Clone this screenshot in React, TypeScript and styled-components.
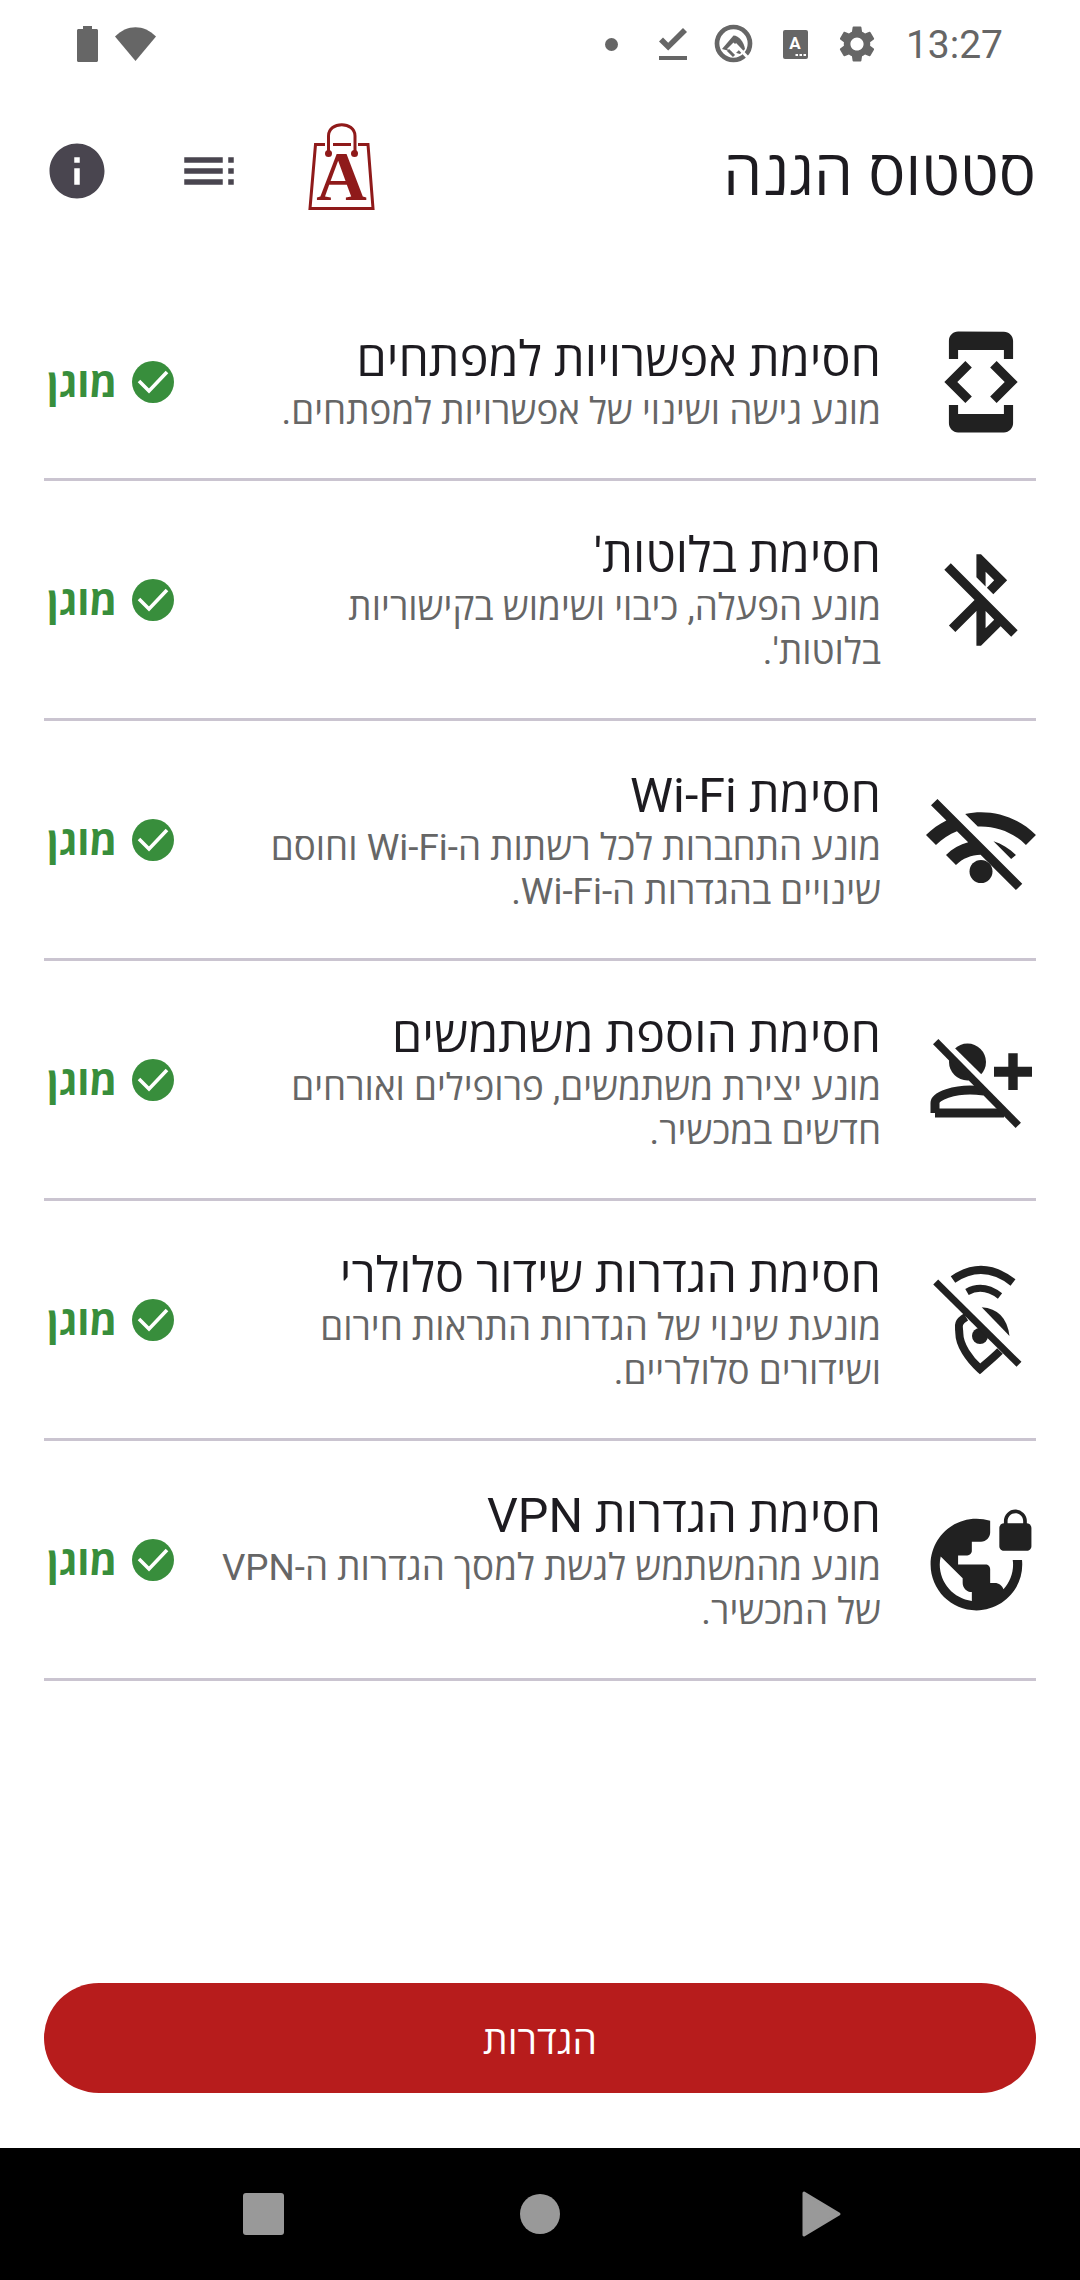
import React from 'react';
import styled, { createGlobalStyle } from 'styled-components';
import {
  MdBluetoothDisabled,
  MdDeveloperMode,
  MdFileDownloadDone,
  MdInfo,
  MdSettings,
  MdToc,
  MdVpnLock,
} from 'react-icons/md';

const GlobalStyle = createGlobalStyle`
  html, body {
    margin: 0;
    padding: 0;
    background: #ffffff;
  }
  body {
    font-family: Roboto, "Open Sans", "Noto Sans", "Liberation Sans", sans-serif;
  }
  * {
    box-sizing: border-box;
  }
`;

// the wifi glyph is drawn bigger and lower than the others in the list
const WifiGlyph = styled.svg`
  margin: 5px -5px 0 0;
`;

const WifiOffIcon = () => (
  <WifiGlyph viewBox="0 0 24 24" width="120" height="120" fill="#212121">
    <circle cx="12" cy="16.3" r="2.3" />
    <path d="M22.99 9C19.15 5.16 13.8 3.76 8.84 4.78l2.52 2.52c3.47-.17 6.99 1.05 9.63 3.7l2-2zm-4 4c-1.29-1.29-2.84-2.2-4.49-2.73l3.53 3.53.96-.8zM2 3.05L5.07 6.1C3.6 6.82 2.22 7.78 1 9l1.99 2c1.24-1.24 2.67-2.16 4.2-2.77l2.24 2.24C7.81 10.89 6.27 11.73 5 13v.01L6.99 15c1.36-1.36 3.14-2.04 4.92-2.06L18.98 20l1.27-1.26L3.29 1.79 2 3.05z" />
  </WifiGlyph>
);

const AddUserOffIcon = () => (
  <svg viewBox="0 0 110 110" width="110" height="110" fill="#212121">
    <circle cx="41.5" cy="37" r="18.5" />
    <path d="M9 88V78C9 70 30 65 44 65C50 65 54 65.5 58 66" fill="none" stroke="#212121" strokeWidth="9" />
    <path d="M9 88H78" fill="none" stroke="#212121" strokeWidth="9" />
    <path d="M14 14L97 96" stroke="#ffffff" strokeWidth="8" />
    <path d="M9.7 16.7L92.3 100.3" stroke="#212121" strokeWidth="7.5" />
    <path d="M68 41.7H106V51.7H91.7V65H82.3V51.7H68ZM82.3 28.3H91.7V42H82.3Z" />
  </svg>
);

const BroadcastOffIcon = () => (
  <svg viewBox="0 0 110 110" width="110" height="110" fill="#212121">
    <path d="M27 14.5Q57 -6 87 17.5" fill="none" stroke="#212121" strokeWidth="8" />
    <path d="M41 27Q57 18 74 31" fill="none" stroke="#212121" strokeWidth="7" />
    <path
      d="M40 52C30 58 33.3 62 33.3 68C33.3 80 43 94 54 104C62 97 68 92 74 86"
      fill="none"
      stroke="#212121"
      strokeWidth="8"
    />
    <circle cx="54" cy="71" r="8" />
    <path d="M14 14L97 96" stroke="#ffffff" strokeWidth="8" />
    <path d="M55.7 42.3Q80 44 83.5 71Z" />
    <path d="M9.7 17L93 99.3" stroke="#212121" strokeWidth="7" />
  </svg>
);

const LogoMark = () => (
  <svg viewBox="0 0 100 105" width="100" height="105">
    <g fill="none" stroke="#8f1a1a" strokeWidth="3">
      <path d="M35 29.5H25.5L20 93.5H83L78 29.5H68" />
      <path d="M38.5 38V21C38.5 6 65 6 65 21V38" />
      <path d="M43 29.5H61" />
    </g>
    <circle cx="38.5" cy="38.5" r="3.5" fill="#8f1a1a" />
    <circle cx="64.5" cy="38.5" r="3.5" fill="#8f1a1a" />
    <text
      x="51.5"
      y="85"
      textAnchor="middle"
      fontFamily='"Liberation Serif", serif'
      fontWeight="700"
      fontSize="70"
      fill="#8f1a1a"
    >
      A
    </text>
  </svg>
);

const BatteryIcon = () => (
  <svg viewBox="0 0 21 36" width="21" height="36" fill="#666666">
    <path d="M6 0H15V3H19.5C20.3 3 21 3.7 21 4.5V34.5C21 35.3 20.3 36 19.5 36H1.5C.7 36 0 35.3 0 34.5V4.5C0 3.7 .7 3 1.5 3H6Z" />
  </svg>
);

const WifiIcon = () => (
  <svg viewBox="0 0 41 34" width="41" height="34" fill="#666666">
    <path d="M20.5 34L0 9.5C12 -3 29 -3 41 9.5Z" />
  </svg>
);

const AndroidQIcon = () => (
  <svg viewBox="0 0 40 42" width="40" height="42">
    <circle cx="19.5" cy="20.5" r="16.5" fill="none" stroke="#666666" strokeWidth="4.7" />
    <path d="M8 26L19.5 12.5C25 12.5 30 19 31 26L26 31Z" fill="#666666" />
    <path d="M13 26L19.5 19.5L26 26L21 31Z" fill="#ffffff" />
    <path d="M14 27L20 33" stroke="#666666" strokeWidth="3" />
    <path d="M21 21L37 38" stroke="#ffffff" strokeWidth="3" />
  </svg>
);

const LocaleIcon = () => (
  <svg viewBox="0 0 25 29" width="25" height="29">
    <rect width="25" height="29" rx="2" fill="#666666" />
    <text
      x="12"
      y="19"
      textAnchor="middle"
      fontFamily="Roboto, sans-serif"
      fontWeight="700"
      fontSize="17"
      fill="#ffffff"
    >
      A
    </text>
    <path d="M12.5 24H15V26H12.5ZM16.5 24H19V26H16.5ZM20.5 24H23V26H20.5Z" fill="#ffffff" />
  </svg>
);

const CheckBadge = () => (
  <svg viewBox="0 0 42 42" width="42" height="42">
    <circle cx="21" cy="21" r="21" fill="#388e3c" />
    <path d="M7 20L17 30L35 11" fill="none" stroke="#ffffff" strokeWidth="3.6" />
  </svg>
);

const protections = [
  {
    icon: <MdDeveloperMode size={110} />,
    title: 'חסימת אפשרויות למפתחים',
    text: 'מונע גישה ושינוי של אפשרויות למפתחים.',
  },
  {
    icon: <MdBluetoothDisabled size={110} />,
    title: "חסימת בלוטות'",
    text: "מונע הפעלה, כיבוי ושימוש בקישוריות\nבלוטות'.",
  },
  {
    icon: <WifiOffIcon />,
    title: 'חסימת Wi-Fi',
    text: 'מונע התחברות לכל רשתות ה-Wi-Fi וחוסם\nשינויים בהגדרות ה-Wi-Fi.',
  },
  {
    icon: <AddUserOffIcon />,
    title: 'חסימת הוספת משתמשים',
    text: 'מונע יצירת משתמשים, פרופילים ואורחים\nחדשים במכשיר.',
  },
  {
    icon: <BroadcastOffIcon />,
    title: 'חסימת הגדרות שידור סלולרי',
    text: 'מונעת שינוי של הגדרות התראות חירום\nושידורים סלולריים.',
  },
  {
    icon: <MdVpnLock size={110} />,
    title: 'חסימת הגדרות VPN',
    text: 'מונע מהמשתמש לגשת למסך הגדרות ה-VPN\nשל המכשיר.',
  },
];

const App = () => {
  return (
    <Screen>
      <GlobalStyle />
      <StatusBar dir="ltr">
        <StatusGroup>
          <BatteryIcon />
          <WifiIcon />
        </StatusGroup>
        <StatusGroup>
          <StatusSlot>
            <StatusDot />
          </StatusSlot>
          <StatusSlot>
            <MdFileDownloadDone size={48} color="#666666" />
          </StatusSlot>
          <StatusSlot>
            <AndroidQIcon />
          </StatusSlot>
          <StatusSlot>
            <LocaleIcon />
          </StatusSlot>
          <StatusSlot>
            <MdSettings size={44} color="#666666" />
          </StatusSlot>
          <Clock>13:27</Clock>
        </StatusGroup>
      </StatusBar>

      <Header dir="rtl">
        <PageTitle>סטטוס הגנה</PageTitle>
        <Logo>
          <LogoMark />
        </Logo>
        <IconButton>
          <MdToc size={66} />
        </IconButton>
        <IconButton>
          <MdInfo size={66} />
        </IconButton>
      </Header>

      <List dir="rtl">
        {protections.map((item, index) => (
          <Row key={`protection_${index}`}>
            <RowIcon>{item.icon}</RowIcon>
            <RowText>
              <RowTitle>{item.title}</RowTitle>
              <RowDescription>{item.text}</RowDescription>
            </RowText>
            <Status>
              <CheckBadge />
              <StatusLabel>מוגן</StatusLabel>
            </Status>
          </Row>
        ))}
      </List>

      <Footer dir="rtl">
        <SettingsButton>הגדרות</SettingsButton>
      </Footer>

      <NavBar>
        <NavSlot>
          <svg viewBox="0 0 60 44" width="60" height="44">
            <rect x="13" y="1" width="41" height="42" rx="3" fill="#999999" />
          </svg>
        </NavSlot>
        <NavSlot>
          <svg viewBox="0 0 60 44" width="60" height="44">
            <circle cx="30" cy="22" r="20" fill="#999999" />
          </svg>
        </NavSlot>
        <NavSlot>
          <svg viewBox="0 0 60 48" width="60" height="48">
            <path
              d="M14 3L49 24L14 45Z"
              fill="#999999"
              stroke="#999999"
              strokeWidth="3"
              strokeLinejoin="round"
            />
          </svg>
        </NavSlot>
      </NavBar>
    </Screen>
  );
};

export default App;

const Screen = styled.div`
  width: 1080px;
  height: 2280px;
  display: flex;
  flex-direction: column;
  background: #ffffff;
  overflow: hidden;
`;

const StatusBar = styled.div`
  height: 88px;
  flex: none;
  display: flex;
  align-items: center;
  justify-content: space-between;
  padding: 0 77px 0 77px;
`;

const StatusGroup = styled.div`
  display: flex;
  align-items: center;
  gap: 17px;

  &:last-child {
    gap: 0;
  }
`;

const StatusSlot = styled.div`
  width: 61.5px;
  display: flex;
  align-items: center;
  justify-content: center;
`;

const StatusDot = styled.div`
  width: 13px;
  height: 13px;
  border-radius: 50%;
  background: #666666;
`;

const Clock = styled.div`
  margin-left: 18px;
  padding-top: 1px;
  font-size: 39px;
  color: #666666;
`;

const Header = styled.header`
  height: 166px;
  flex: none;
  display: flex;
  align-items: center;
  padding: 0 44px 0 11px;
`;

const PageTitle = styled.h1`
  margin: 0 0 0 auto;
  font-size: 62px;
  font-weight: 400;
  color: #1d1b20;
`;

const Logo = styled.div`
  height: 105px;
  margin: 0 0 7px 15px;
`;

const IconButton = styled.div`
  width: 132px;
  height: 132px;
  display: flex;
  align-items: center;
  justify-content: center;
  color: #49454f;
`;

const List = styled.div`
  margin: 31px 44px 0;
`;

const Row = styled.div`
  display: flex;
  align-items: center;
  padding: 44.5px 0;
  border-bottom: 3px solid #cac4d0;
`;

const RowIcon = styled.div`
  width: 110px;
  height: 110px;
  flex: none;
  margin: -3px 0;
  color: #212121;

  svg {
    display: block;
  }
`;

const RowText = styled.div`
  flex: 1;
  margin: 0 45px 0 30px;
`;

const RowTitle = styled.div`
  height: 60px;
  font-size: 48.5px;
  line-height: 60px;
  color: #1d1b20;
`;

const RowDescription = styled.div`
  font-size: 36.8px;
  line-height: 44px;
  color: #666666;
  white-space: pre-line;
`;

const Status = styled.div`
  width: 130px;
  flex: none;
  display: flex;
  align-items: center;
  justify-content: space-between;
  padding-left: 3px;
`;

const StatusLabel = styled.span`
  font-size: 40px;
  font-weight: 700;
  color: #388e3c;
`;

const Footer = styled.div`
  margin-top: auto;
  padding: 0 44px 55px;
`;

const SettingsButton = styled.div`
  height: 110px;
  border-radius: 55px;
  display: flex;
  align-items: center;
  justify-content: center;
  background: #b71c1c;
  color: #ffffff;
  font-size: 39px;
  font-weight: 500;
`;

const NavBar = styled.nav`
  height: 132px;
  flex: none;
  display: flex;
  align-items: center;
  justify-content: center;
  background: #000000;
`;

const NavSlot = styled.div`
  width: 280px;
  display: flex;
  justify-content: center;
`;
